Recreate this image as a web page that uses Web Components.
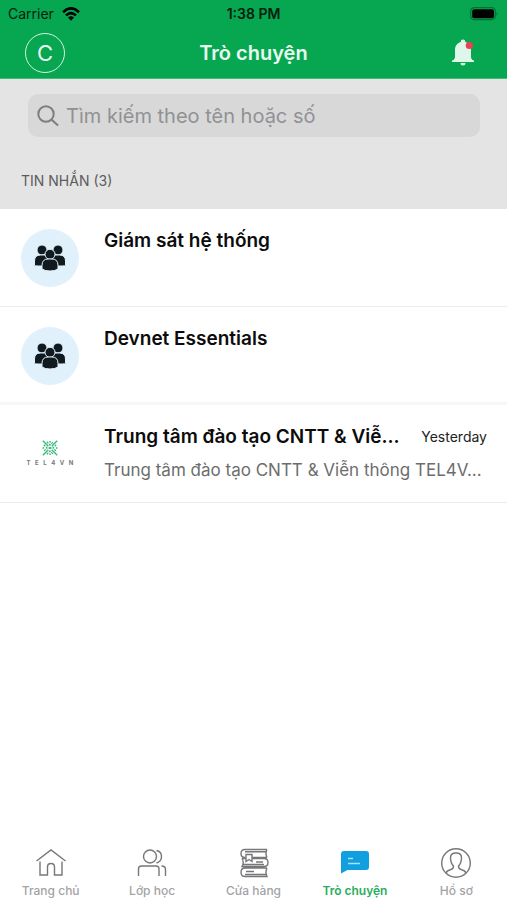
<!DOCTYPE html>
<html lang="vi">
<head>
<meta charset="utf-8">
<meta name="viewport" content="width=device-width, initial-scale=1">
<title>Trò chuyện</title>
<style>
  body { margin: 0; background: #fff; color: #0c0c0c; font-family: Inter, "Noto Sans", sans-serif; }
</style>
</head>
<body>
<chat-app></chat-app>
<script>
const define = (name, html) => {
  const template = document.createElement('template');
  template.innerHTML = html;
  customElements.define(name, class extends HTMLElement {
    constructor() {
      super();
      this.attachShadow({ mode: 'open' }).append(template.content.cloneNode(true));
    }
  });
};

define('status-bar', `
  <style>
    :host { display: grid; grid-template-columns: 1fr auto 1fr; align-items: center; height: 27px; padding: 0 8px; color: #04200f; font-size: 14px; line-height: 20px; }
    .carrier { display: flex; align-items: center; gap: 8px; }
    .time { font-weight: 600; }
    .battery { justify-self: end; }
    svg { display: block; }
  </style>
  <div class="carrier"><span>Carrier</span>
    <svg width="18" height="14" viewBox="0 0 18 14" aria-hidden="true">
      <path d="M1 5.2Q9-2.6 17 5.2M4 8.4Q9 3.8 14 8.4" fill="none" stroke="#000" stroke-width="2.6"/>
      <path d="M6 10.6Q9 8 12 10.6L9 13.8Z" fill="#000"/>
    </svg>
  </div>
  <span class="time">1:38 PM</span>
  <svg class="battery" width="29" height="14" viewBox="0 0 29 14" aria-label="Pin">
    <rect x=".7" y=".7" width="24.6" height="12" rx="3.6" fill="none" stroke="#05712f" stroke-width="1.2"/>
    <rect x="2.2" y="2.2" width="21.8" height="9" rx="2" fill="#000"/>
    <path d="M26.6 4.8q2.2 1.9 0 3.9z" fill="#05712f"/>
  </svg>
`);

define('title-bar', `
  <style>
    :host { display: grid; grid-template-columns: 1fr auto 1fr; align-items: center; height: 51px; padding: 0 25px; border-bottom: 1px solid #45b978; color: #e9fbf0; }
    h1 { margin: 0; font-size: 20px; line-height: 28px; font-weight: 600; }
    button { font: inherit; color: inherit; background: none; border: 0; padding: 0; box-sizing: border-box; }
    .user { width: 40px; height: 40px; border: 1px solid #d3f5e0; border-radius: 50%; font-size: 22px; line-height: 38px; }
    .bell { justify-self: end; padding-right: 8px; }
    svg { display: block; }
  </style>
  <button class="user" aria-label="Tài khoản">C</button>
  <h1><slot></slot></h1>
  <button class="bell" aria-label="Thông báo">
    <svg width="22" height="27" viewBox="0 0 22 27">
      <path d="M11 .5a2.300 2.300 0 0 0-2.300 2.400C5 4 3 7 3 10.900v6.500c0 2-.6 3.200-3 4.200v1.300h22v-1.300c-2.400-1-3-2.200-3-4.200v-6.500c0-3.900-2-6.900-5.700-8A2.300 2.300 0 0 0 11 .5ZM8.500 24h5a2.500 2.500 0 0 1-5 0Z" fill="#def7e8"/>
      <circle cx="17.300" cy="6.500" r="3.600" fill="#ea4054"/>
    </svg>
  </button>
`);

define('search-panel', `
  <style>
    :host { display: block; background: #e4e4e4; padding: 15px 27px 18px 28px; }
    label { display: flex; align-items: center; gap: 7px; height: 43px; padding: 0 9px; border-radius: 10px; background: #d8d8d8; }
    svg { display: block; flex: none; }
    input { flex: 1; min-width: 0; padding: 0; border: 0; outline: 0; background: none; font: inherit; font-size: 20px; line-height: 28px; color: #333; }
    input::placeholder { color: #919195; opacity: 1; }
    h2 { margin: 34px 0 0 -7px; font-size: 14px; line-height: 20px; font-weight: 400; color: #5b5b5b; }
  </style>
  <label>
    <svg width="22" height="22" viewBox="0 0 22 22" fill="none" stroke="#7e7e82" stroke-width="2" stroke-linecap="round" aria-hidden="true"><circle cx="9" cy="9" r="7.700"/><path d="m14.700 14.700 5.800 5.300"/></svg>
    <input type="text" aria-label="Tìm kiếm" placeholder="Tìm kiếm theo tên hoặc số">
  </label>
  <h2><slot></slot></h2>
`);

define('group-avatar', `
  <style>
    :host { display: grid; place-items: center; width: 58px; height: 58px; border-radius: 50%; background: #e1f1fc; }
    svg { display: block; }
  </style>
  <svg width="32" height="28" viewBox="0 0 32 28" fill="#111a1e" stroke="#e1f1fc" stroke-width="1" aria-hidden="true">
    <circle cx="8" cy="6" r="5"/><circle cx="24" cy="6" r="5"/>
    <path d="M.5 21q0 0 0-4 0-6 6-6h4q5 0 5 5v6H4Q.5 22 .5 21ZM31.500 21v-4q0-6-6-6h-4q-5 0-5 5v6H28q3.500 0 3.500-1Z"/>
    <circle cx="16" cy="10.300" r="5"/>
    <path d="M8 25v-3.500q0-6.500 6-6.500h4q6 0 6 6.500V25q-3 2-8 2t-8-2Z"/>
  </svg>
`);

define('brand-avatar', `
  <style>
    :host { display: flex; flex-direction: column; align-items: center; justify-content: center; gap: 2px; width: 58px; height: 58px; }
    svg { display: block; }
    span { display: flex; justify-content: space-between; width: 47px; font-size: 6px; line-height: 10px; font-weight: 700; color: #77777c; }
    i { font-style: normal; }
  </style>
  <svg width="16" height="16" viewBox="0 0 16 16" fill="none" stroke="#35b875" stroke-width="1.300" aria-hidden="true">
    <path d="m.8.800 5.500 5.500M9.700 9.700l5.500 5.500M15.200.800 9.700 6.300M6.300 9.700.800 15.200"/>
    <path d="m4.800 1.800 3.200 3.200 3.200-3.200M4.800 14.200 8 11l3.200 3.200M1.800 4.800 5 8l-3.200 3.200M14.200 4.800 11 8l3.200 3.200" stroke-dasharray="2.200 1"/>
    <path d="M8 1v1.500M8 13.500V15M.500 8H2M14 8h1.500M8 7v2M6.500 8h3" stroke-width="1.500"/>
  </svg>
  <span aria-label="TEL4VN"><i>T</i><i>E</i><i>L</i><i>4</i><i>V</i><i>N</i></span>
`);

define('chat-row', `
  <style>
    :host { display: block; }
    a { display: flex; gap: 25px; min-height: 98px; box-sizing: border-box; padding: 20px 20px 14px 21px; border-bottom: 1px solid #ececec; color: inherit; text-decoration: none; }
    :host([divider]) a { border-bottom: 3px solid #f7f7f7; }
    .body { flex: 1; min-width: 0; }
    .top { display: flex; align-items: center; gap: 16px; margin-top: -2px; }
    .title, .preview { overflow: hidden; text-overflow: ellipsis; white-space: nowrap; }
    .title { flex: 1; min-width: 0; font-size: 19px; line-height: 28px; font-weight: 600; }
    .time { font-size: 14px; line-height: 20px; color: #222; }
    .preview { margin-top: 5px; font-size: 17px; line-height: 28px; color: #6d6d6d; }
  </style>
  <a href="#">
    <slot name="avatar"></slot>
    <div class="body">
      <div class="top"><div class="title"><slot></slot></div><div class="time"><slot name="time"></slot></div></div>
      <div class="preview"><slot name="preview"></slot></div>
    </div>
  </a>
`);

define('tab-item', `
  <style>
    :host { flex: 1 1 0; min-width: 0; }
    a { display: flex; flex-direction: column; align-items: center; gap: 3px; padding: 6px 0 0; color: #a3a3a5; font-size: 12px; line-height: 18px; font-weight: 500; text-decoration: none; white-space: nowrap; }
    :host([active]) a { color: #27ae60; font-weight: 600; }
    ::slotted(svg) { display: block; width: 32px; height: 32px; fill: none; stroke: #77777a; stroke-width: 1.4; }
  </style>
  <a href="#"><slot name="icon"></slot><span><slot></slot></span></a>
`);

define('tab-bar', `
  <style>
    :host { display: block; }
    nav { display: flex; }
  </style>
  <nav aria-label="Điều hướng"><slot></slot></nav>
`);

define('chat-app', `
  <style>
    :host { display: flex; flex-direction: column; min-height: 100vh; }
    header { background: #07a650; }
    main { flex: 1; }
  </style>
  <header><status-bar></status-bar><title-bar>Trò chuyện</title-bar></header>
  <main>
    <search-panel>TIN NHẮN (3)</search-panel>
    <chat-row><group-avatar slot="avatar"></group-avatar>Giám sát hệ thống</chat-row>
    <chat-row divider><group-avatar slot="avatar"></group-avatar>Devnet Essentials</chat-row>
    <chat-row><brand-avatar slot="avatar"></brand-avatar>Trung tâm đào tạo CNTT &amp; Viễ...<span slot="time">Yesterday</span><span slot="preview">Trung tâm đào tạo CNTT &amp; Viễn thông TEL4V...</span></chat-row>
  </main>
  <tab-bar>
    <tab-item>
      <svg slot="icon" viewBox="0 0 32 32"><path d="M1.500 14 16 3l14.500 11M5 14.500V28h7.500v-8q0-3.500 3.500-3.500t3.500 3.500v8H27V14.500"/></svg>Trang chủ
    </tab-item>
    <tab-item>
      <svg slot="icon" viewBox="0 0 32 32"><circle cx="14" cy="9.500" r="6.500"/><path d="M20.500 3.500q5 1 5 6t-5 6.500M2.500 29v-7q0-3 3-3H20q3 0 3 3v7M25.500 19q4 0 4 3.500V29"/></svg>Lớp học
    </tab-item>
    <tab-item>
      <svg slot="icon" viewBox="0 0 32 32"><path d="M29 2.500H7q-4 0-4 4t4 4M13.500 10.500H29M29 2.500q-2 4 0 8M7 4.700h21M4 11.500h4M14 11.500h12q4 0 4 4t-4 4H4q2.500-4 0-8M5 17.500h21M29 21H7q-4 0-4 4.200t4 4.300h22q-2-4.200 0-8.500M7 27.500h21M18 15h7M8 24.500h8M8 7.500h6v7l-3-2-3 2Z"/></svg>Cửa hàng
    </tab-item>
    <tab-item active>
      <svg slot="icon" viewBox="0 0 32 32"><path d="M5 4h22q3 0 3 3v13q0 3-3 3H8.500L2 26.500V7q0-3 3-3Z" fill="#119fdf" stroke="none"/><path d="M9 11.500h5M9 16.500h12" stroke="#a5e3fb" stroke-width="1.600"/></svg>Trò chuyện
    </tab-item>
    <tab-item>
      <svg slot="icon" viewBox="0 0 32 32"><circle cx="16" cy="16" r="14.300"/><path d="M6 26q1-2.500 5-3.500 2.500-.800 2.500-3.500-3-3-3-8.500Q10.500 6 16 6t5.500 4.500q0 5.500-3 8.500 0 2.700 2.500 3.500 4 1 5 3.500"/></svg>Hồ sơ
    </tab-item>
  </tab-bar>
`);
</script>
</body>
</html>
